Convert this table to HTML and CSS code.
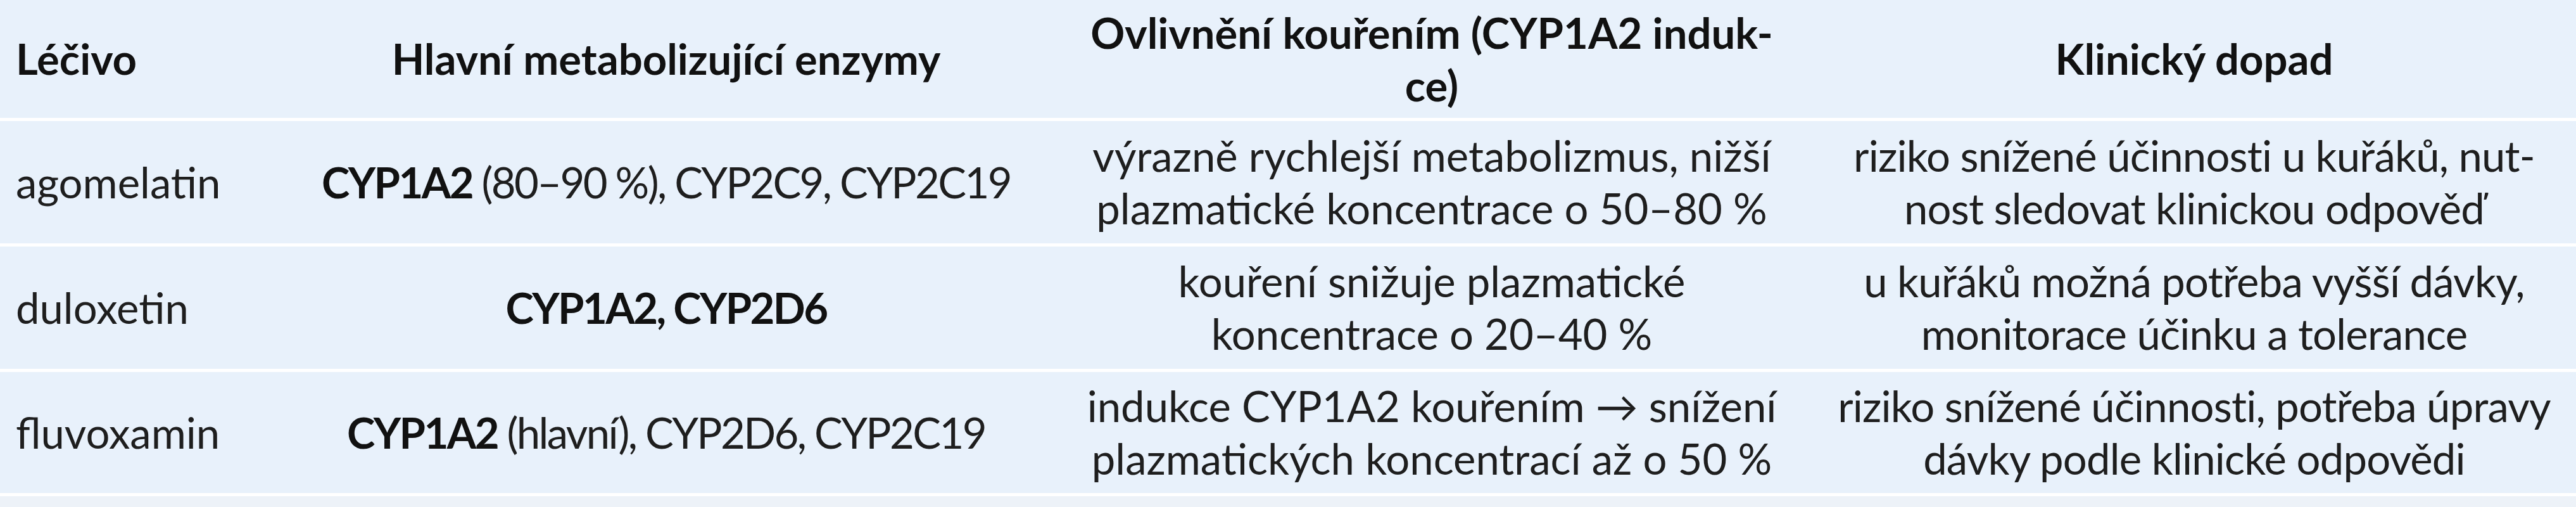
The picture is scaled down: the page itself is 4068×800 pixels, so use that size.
FILE: index.html
```html
<!DOCTYPE html>
<html lang="cs">
<head>
<meta charset="utf-8">
<title>Léčiva a kouření</title>
<link rel="stylesheet" href="styles.css">
</head>
<body>
<table class="drug-table">
  <colgroup>
    <col class="c-drug">
    <col class="c-enz">
    <col class="c-smoke">
    <col class="c-impact">
  </colgroup>
  <thead>
    <tr class="head-row">
      <th class="cell-left">Léčivo</th>
      <th class="cell-enz">Hlavní metabolizující enzymy</th>
      <th>Ovlivnění kouřením (CYP1A2 induk-<br>ce)</th>
      <th>Klinický dopad</th>
    </tr>
  </thead>
  <tbody>
    <tr class="body-row">
      <td class="cell-left">agomelatin</td>
      <td class="cell-enz"><strong>CYP1A2</strong> (80–90&nbsp;%), CYP2C9, CYP2C19</td>
      <td>výrazně rychlejší metabolizmus, nižší<br>plazmatické koncentrace o 50–80&nbsp;%</td>
      <td class="cell-impact">riziko snížené účinnosti u kuřáků, nut-<br>nost sledovat klinickou odpověď</td>
    </tr>
    <tr class="body-row">
      <td class="cell-left">duloxetin</td>
      <td class="cell-enz"><strong>CYP1A2, CYP2D6</strong></td>
      <td>kouření snižuje plazmatické<br>koncentrace o 20–40&nbsp;%</td>
      <td class="cell-impact">u kuřáků možná potřeba vyšší dávky,<br>monitorace účinku a tolerance</td>
    </tr>
    <tr class="body-row last-row">
      <td class="cell-left">fluvoxamin</td>
      <td class="cell-enz"><strong>CYP1A2</strong> (hlavní), CYP2D6, CYP2C19</td>
      <td>indukce CYP1A2 kouřením → snížení<br>plazmatických koncentrací až o 50&nbsp;%</td>
      <td class="cell-impact">riziko snížené účinnosti, potřeba úpravy<br>dávky podle klinické odpovědi</td>
    </tr>
    <tr class="tail-row">
      <td></td><td></td><td></td><td></td>
    </tr>
  </tbody>
</table>
</body>
</html>
```
FILE: styles.css
```css
html, body {
  margin: 0;
  padding: 0;
  background: #e8f1fb;
}

.drug-table {
  width: 4068px;
  border-collapse: collapse;
  table-layout: fixed;
  font-family: "Lato", "Roboto", "DejaVu Sans", sans-serif;
  font-size: 67px;
  line-height: 83px;
  color: #1e1e1e;
  background: #e8f1fb;
}

.c-drug { width: 444px; }
.c-enz { width: 1216px; }
.c-smoke { width: 1202px; }
.c-impact { width: 1206px; }

.drug-table th,
.drug-table td {
  padding: 0;
  text-align: center;
  vertical-align: middle;
  white-space: nowrap;
}

.drug-table th {
  font-weight: 700;
  color: #111;
}

.drug-table strong {
  font-weight: 700;
  color: #111;
}

.drug-table .cell-left {
  text-align: left;
  padding-left: 25px;
}

.drug-table td.cell-enz {
  letter-spacing: -2.6px;
}

.drug-table td.cell-impact {
  letter-spacing: -0.8px;
}

.head-row {
  height: 188px;
  border-bottom: 5px solid #ffffff;
}

.body-row {
  height: 198px;
  border-bottom: 5px solid #ffffff;
}

.last-row {
  height: 196px;
}

.tail-row {
  height: 40px;
  background: #edf2f8;
}
```
